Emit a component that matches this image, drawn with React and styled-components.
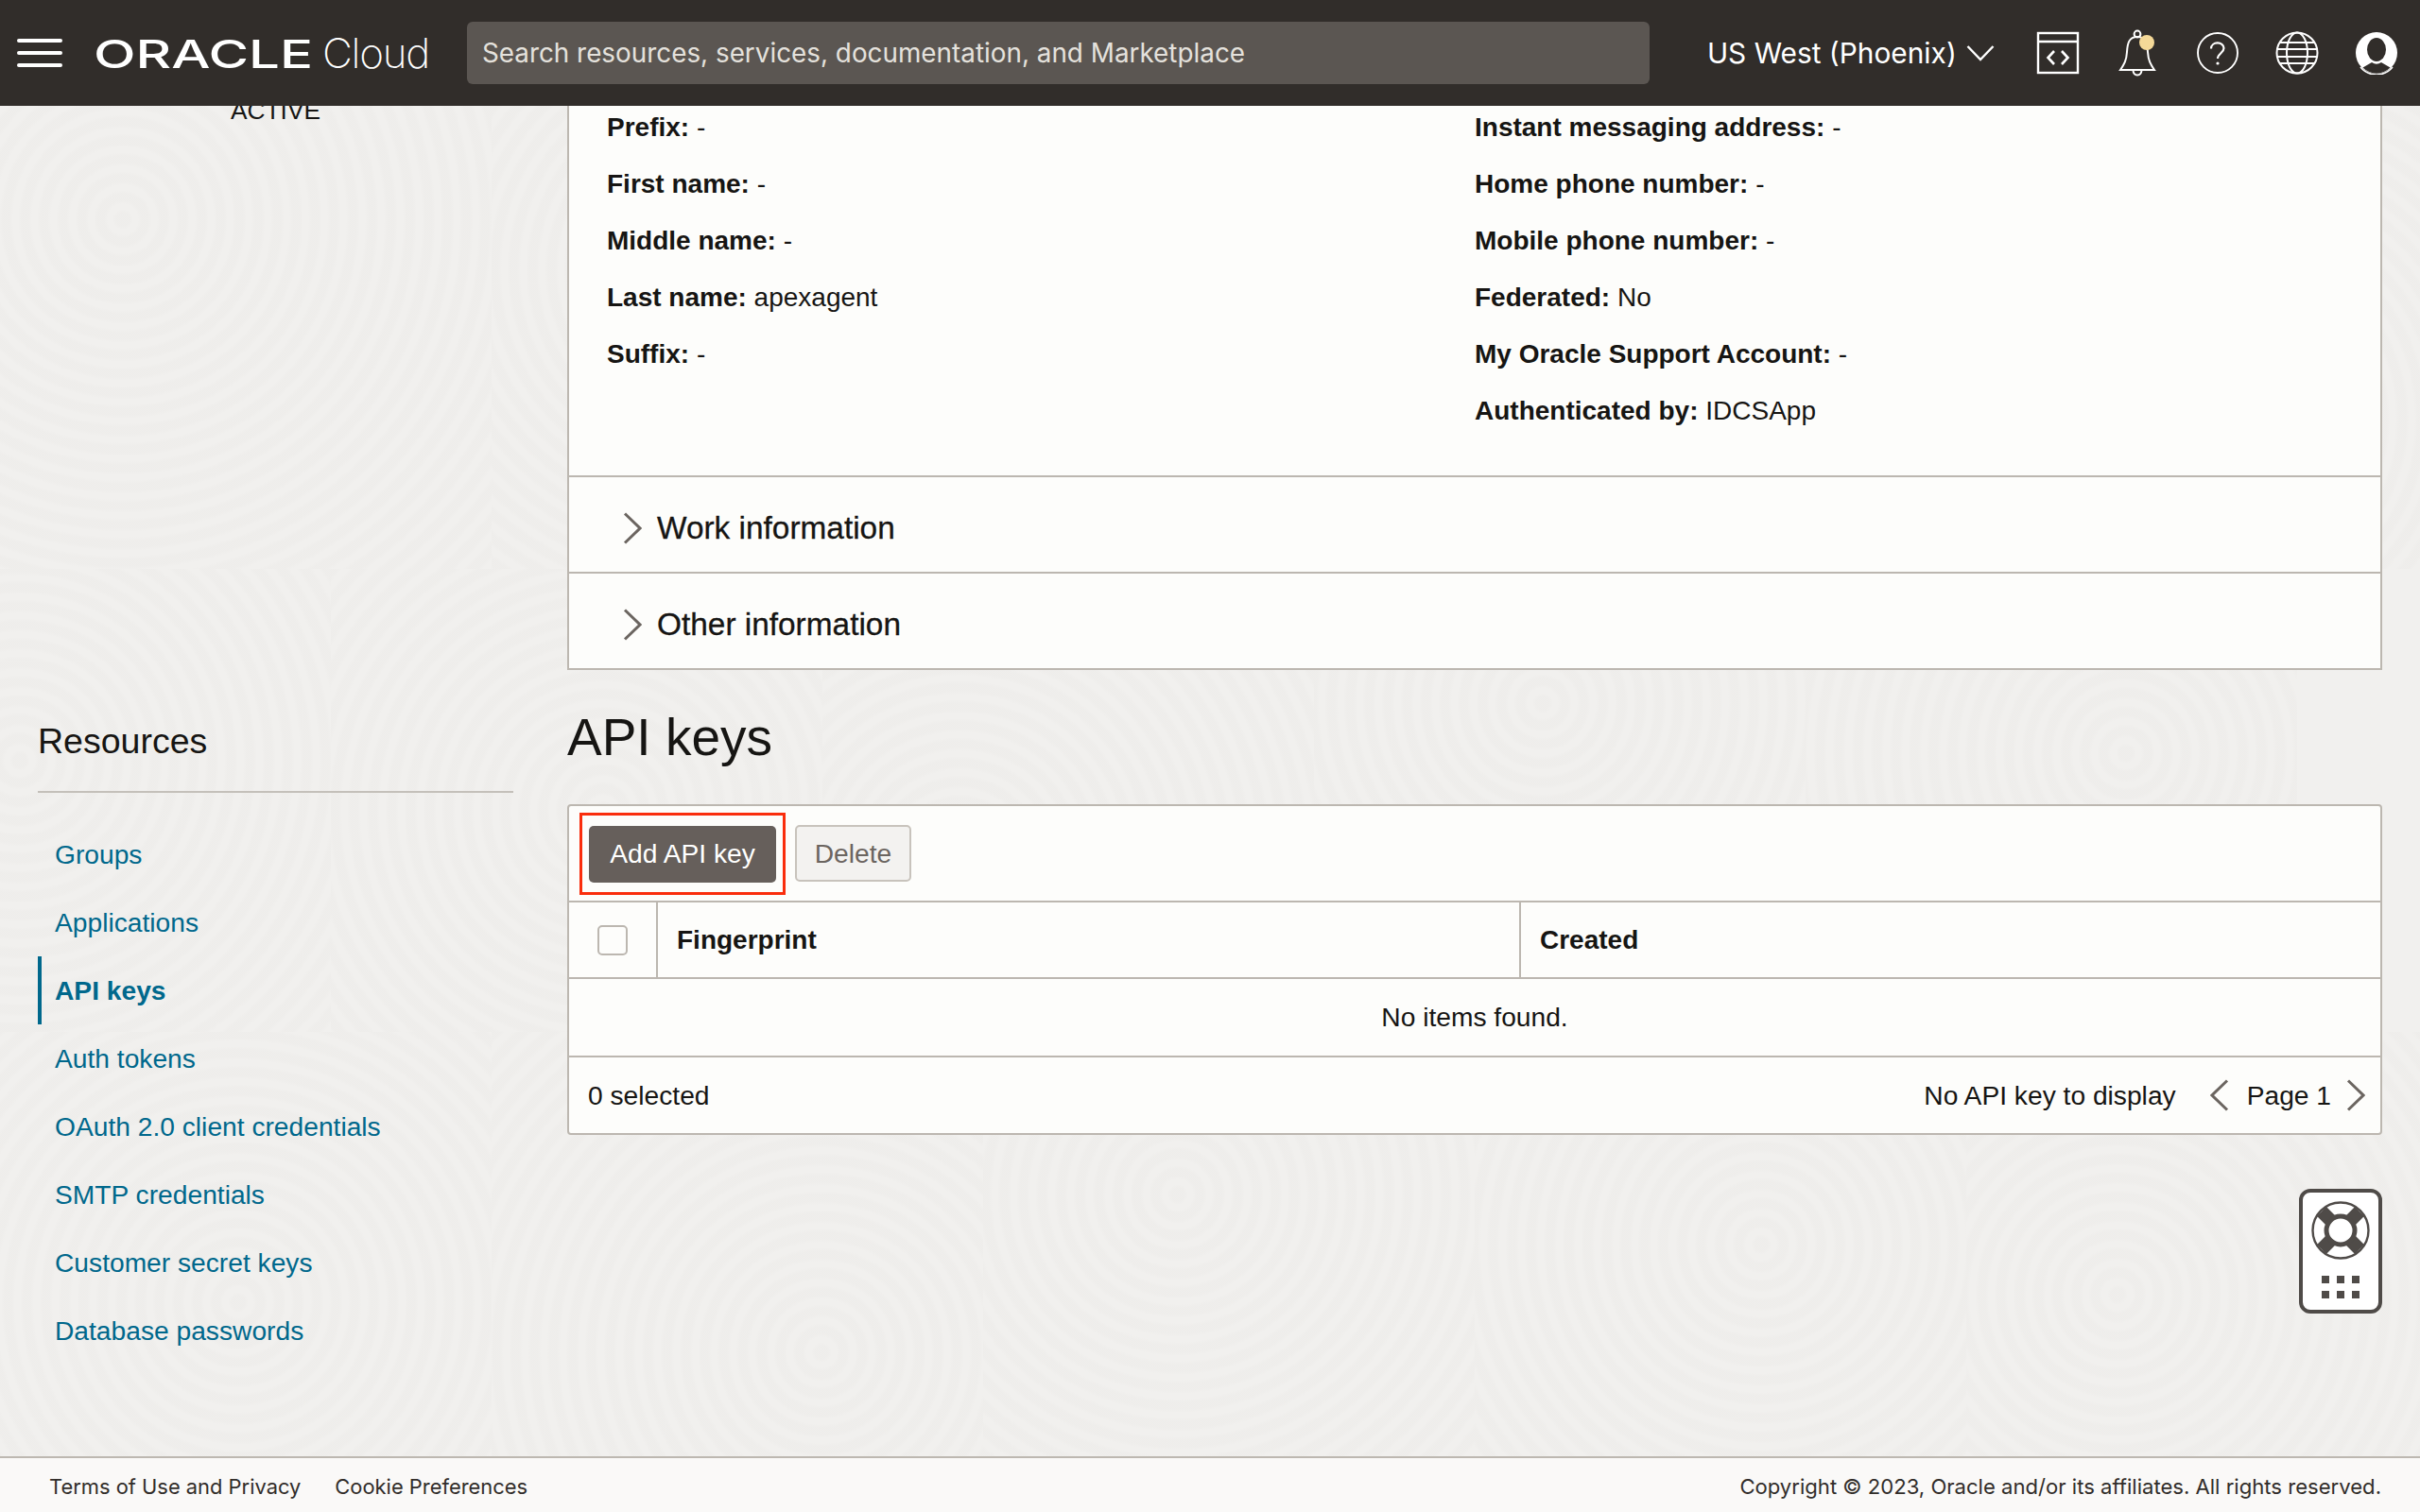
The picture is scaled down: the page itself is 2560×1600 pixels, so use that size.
import React from 'react'
import styled, { createGlobalStyle } from 'styled-components'

const leftRows = [
    ['Prefix:', '-'],
    ['First name:', '-'],
    ['Middle name:', '-'],
    ['Last name:', 'apexagent'],
    ['Suffix:', '-']
]

const rightRows = [
    ['Instant messaging address:', '-'],
    ['Home phone number:', '-'],
    ['Mobile phone number:', '-'],
    ['Federated:', 'No'],
    ['My Oracle Support Account:', '-'],
    ['Authenticated by:', 'IDCSApp']
]

const links = [
    'Groups',
    'Applications',
    'API keys',
    'Auth tokens',
    'OAuth 2.0 client credentials',
    'SMTP credentials',
    'Customer secret keys',
    'Database passwords'
]

// swirl tiles for the page background, laid side by side so the rings don't interfere
const tiles = []
for (let row = 0; row < 3; row++) {
    for (let col = 0; col < 5; col++) {
        tiles.push({
            x: col * 520 - (row % 2) * 170,
            y: row * 490,
            cx: 130 + ((col * 97 + row * 61) % 240),
            cy: 120 + ((col * 53 + row * 83) % 220)
        })
    }
}

const swirlImages = tiles
    .map(
        t =>
            `repeating-radial-gradient(circle at ${t.cx}px ${t.cy}px, rgba(90, 80, 70, 0.014) 0 7px, transparent 11px 16px, rgba(90, 80, 70, 0.014) 20px)`
    )
    .join(', ')
const swirlPositions = tiles.map(t => `${t.x}px ${t.y}px`).join(', ')

const Chevron = ({ dir = 'right', color = '#6b6560', width = 20, height = 34 }) => (
    <svg width={width} height={height} viewBox='0 0 20 34' fill='none'>
        <path
            d={dir === 'right' ? 'M2 1.5 L18 17 L2 32.5' : 'M18 1.5 L2 17 L18 32.5'}
            stroke={color}
            strokeWidth='3'
        />
    </svg>
)

const App = () => (
    <Page>
        <GlobalStyle />
        <Header>
            <Burger>
                <span />
                <span />
                <span />
            </Burger>
            <svg width='236' height='50' viewBox='0 0 236 50'>
                <text
                    x='0'
                    y='41'
                    fill='#fff'
                    fontFamily='Inter, sans-serif'
                    fontWeight='500'
                    fontSize='41'
                    textLength='232'
                    lengthAdjust='spacingAndGlyphs'
                >
                    ORACLE
                </text>
            </svg>
            <CloudText>Cloud</CloudText>
            <Search>Search resources, services, documentation, and Marketplace</Search>
            <Region>
                US West (Phoenix)
                <svg width='30' height='18' viewBox='0 0 30 18' fill='none'>
                    <path d='M1.5 2 L15 16 L28.5 2' stroke='#fff' strokeWidth='2.4' />
                </svg>
            </Region>
            <HeaderIcons>
                <svg width='46' height='46' viewBox='0 0 46 46' fill='none' stroke='#fff' strokeWidth='2.4'>
                    <rect x='2' y='2' width='42' height='42' />
                    <path d='M2 11 H44' />
                    <path d='M19 21 L12.5 28 L19 35 M27 21 L33.5 28 L27 35' strokeWidth='2.6' />
                </svg>
                <svg width='44' height='50' viewBox='0 0 44 50' fill='none' stroke='#fff' strokeWidth='2'>
                    <circle cx='20' cy='5' r='3.4' />
                    <path d='M2 43 C6 37 8.5 33 9 24 C9.5 15 11 8 20 8 C29 8 30.5 15 31 24 C31.5 33 34 37 38 43 Z' />
                    <path d='M15.5 43.5 C16 50 24 50 24.5 43.5' />
                    <circle cx='30' cy='14' r='8' fill='#f5d998' stroke='none' />
                </svg>
                <svg width='46' height='46' viewBox='0 0 46 46' fill='none' stroke='#fff' strokeWidth='1.9'>
                    <circle cx='23' cy='23' r='21' />
                    <path d='M16 18.5 C16 10.5 29.5 10.5 29.5 18 C29.5 23 23 23.5 23 29' strokeWidth='2.2' />
                    <circle cx='23' cy='34' r='1.6' fill='#fff' stroke='none' />
                </svg>
                <svg width='46' height='46' viewBox='0 0 46 46' fill='none' stroke='#fff' strokeWidth='2'>
                    <circle cx='23' cy='23' r='21.5' />
                    <ellipse cx='23' cy='23' rx='11' ry='21.5' />
                    <path d='M5 12 H41 M1.5 19 H44.5 M1.5 27 H44.5 M5 34 H41' />
                </svg>
                <svg width='46' height='46' viewBox='0 0 46 46'>
                    <circle cx='23' cy='23' r='22' fill='#fff' />
                    <ellipse cx='23' cy='19.5' rx='10' ry='12.5' fill='#312d2a' />
                    <path d='M8.5 38.5 L18 33 Q23 36.5 28 33 L37.5 38.5 A20 20 0 0 1 8.5 38.5 Z' fill='#312d2a' />
                    <path d='M6 38 A22 22 0 0 0 40 38' fill='none' stroke='#fff' strokeWidth='1.6' />
                </svg>
            </HeaderIcons>
        </Header>

        <Viewport>
            <Scrolled>
                <Sidebar>
                    <Status>ACTIVE</Status>
                    <SideTitle>Resources</SideTitle>
                    <Nav>
                        {links.map(link => (
                            <NavItem key={link} $active={link === 'API keys'}>
                                {link}
                            </NavItem>
                        ))}
                    </Nav>
                </Sidebar>

                <Main>
                    <InfoPanel>
                        <Details>
                            <Column>
                                {leftRows.map(([label, value]) => (
                                    <Row key={label}>
                                        <b>{label}</b> {value}
                                    </Row>
                                ))}
                            </Column>
                            <Column>
                                {rightRows.map(([label, value]) => (
                                    <Row key={label}>
                                        <b>{label}</b> {value}
                                    </Row>
                                ))}
                            </Column>
                        </Details>
                        <Section>
                            <Chevron />
                            <SectionLabel>Work information</SectionLabel>
                        </Section>
                        <Section>
                            <Chevron />
                            <SectionLabel>Other information</SectionLabel>
                        </Section>
                    </InfoPanel>

                    <Heading>API keys</Heading>

                    <TablePanel>
                        <Toolbar>
                            <Highlight>
                                <PrimaryButton>Add API key</PrimaryButton>
                            </Highlight>
                            <GhostButton>Delete</GhostButton>
                        </Toolbar>
                        <HeadRow>
                            <CheckCell>
                                <Checkbox />
                            </CheckCell>
                            <HeadCell $width='913px'>Fingerprint</HeadCell>
                            <HeadCell>Created</HeadCell>
                        </HeadRow>
                        <EmptyRow>No items found.</EmptyRow>
                        <TableFooter>
                            <span>0 selected</span>
                            <Pager>
                                <PagerText>No API key to display</PagerText>
                                <Chevron dir='left' />
                                <PageLabel>Page 1</PageLabel>
                                <Chevron />
                            </Pager>
                        </TableFooter>
                    </TablePanel>
                </Main>
            </Scrolled>

            <HelpWidget>
                <svg width='62' height='62' viewBox='0 0 62 62'>
                    <circle cx='31' cy='31' r='29.5' fill='#fff' stroke='#4f4b48' strokeWidth='2.4' />
                    <g stroke='#4f4b48' strokeWidth='14'>
                        <path d='M11 11 L22 22 M51 11 L40 22 M11 51 L22 40 M51 51 L40 40' />
                    </g>
                    <circle cx='31' cy='31' r='15' fill='#fff' stroke='#4f4b48' strokeWidth='5' />
                </svg>
                <DotGrid>
                    {[0, 1, 2, 3, 4, 5].map(i => (
                        <i key={i} />
                    ))}
                </DotGrid>
            </HelpWidget>
        </Viewport>

        <Footer>
            <FooterLinks>
                <span>Terms of Use and Privacy</span>
                <span>Cookie Preferences</span>
            </FooterLinks>
            <Copyright>Copyright © 2023, Oracle and/or its affiliates. All rights reserved.</Copyright>
        </Footer>
    </Page>
)

const GlobalStyle = createGlobalStyle`
    * {
        box-sizing: border-box;
    }

    body {
        margin: 0;
        font-family: 'Liberation Sans', Arial, sans-serif;
        color: #161513;
    }
`

const Page = styled.div`
    width: 2560px;
    height: 1600px;
    display: flex;
    flex-direction: column;
    overflow: hidden;
`

const Header = styled.header`
    height: 112px;
    flex: none;
    display: flex;
    align-items: center;
    padding-left: 18px;
    background: #312d2a;
    position: relative;
    z-index: 2;
`

const Burger = styled.div`
    width: 48px;
    display: flex;
    flex-direction: column;
    gap: 9px;
    margin-right: 33px;

    span {
        display: block;
        height: 4px;
        border-radius: 2px;
        background: #fff;
    }
`

const CloudText = styled.span`
    margin-left: 6px;
    font-family: Inter, sans-serif;
    font-weight: 200;
    font-size: 44px;
    letter-spacing: -1.3px;
    color: #fff;
`

const Search = styled.div`
    width: 1251px;
    height: 66px;
    margin-left: 40px;
    padding-left: 16px;
    display: flex;
    align-items: center;
    border-radius: 6px;
    background: #5b5652;
    color: #e4e1dc;
    font-family: Inter, sans-serif;
    font-size: 27.85px;
`

const Region = styled.div`
    margin-left: 61px;
    display: flex;
    align-items: center;
    gap: 10px;
    color: #fff;
    font-family: Inter, sans-serif;
    font-size: 29.85px;
`

const HeaderIcons = styled.div`
    margin-left: 44px;
    display: flex;
    align-items: center;
    gap: 38px;

    svg:first-child {
        margin-right: 3px;
    }
`

const Viewport = styled.div`
    flex: 1;
    min-height: 0;
    overflow: hidden;
    position: relative;
    background-color: #f1f0ee;
    background-image: ${swirlImages};
    background-size: 520px 490px;
    background-position: ${swirlPositions};
    background-repeat: no-repeat;
`

const Scrolled = styled.div`
    display: flex;
    margin-top: -40px;
`

const Sidebar = styled.aside`
    width: 600px;
    flex: none;
    padding: 25px 57px 0 40px;
`

const Status = styled.div`
    line-height: 40px;
    font-size: 26.3px;
    text-align: center;
`

const SideTitle = styled.h2`
    margin: 621px 0 0;
    padding-bottom: 27px;
    border-bottom: 2px solid #c4c0ba;
    line-height: 52px;
    font-size: 37.5px;
    font-weight: 400;
`

const Nav = styled.nav`
    margin-top: 29px;
    display: flex;
    flex-direction: column;
`

const NavItem = styled.a`
    height: 72px;
    display: flex;
    align-items: center;
    padding-left: 14px;
    border-left: 4px solid ${props => (props.$active ? '#00688c' : 'transparent')};
    color: #00688c;
    font-size: 28.2px;
    font-weight: ${props => (props.$active ? 700 : 400)};
`

const Main = styled.main`
    width: 1920px;
    flex: none;
`

const InfoPanel = styled.section`
    border: 2px solid #bcb7b0;
    border-top: none;
    background: #fdfdfb;
`

const Details = styled.div`
    display: grid;
    grid-template-columns: 918px 1fr;
    padding: 33px 0 38px 40px;
`

const Column = styled.div`
    display: flex;
    flex-direction: column;
`

const Row = styled.div`
    line-height: 60px;
    font-size: 28px;

    b {
        font-weight: 700;
    }
`

const Section = styled.div`
    height: 102px;
    display: flex;
    align-items: center;
    gap: 16px;
    padding: 7px 0 0 57px;
    border-top: 2px solid #bcb7b0;
`

const SectionLabel = styled.span`
    font-size: 33.4px;
    -webkit-text-stroke: 0.3px #161513;
`

const Heading = styled.h1`
    margin: 0;
    height: 142px;
    display: flex;
    align-items: center;
    font-size: 55px;
    font-weight: 400;
`

const TablePanel = styled.section`
    border: 2px solid #bcb7b0;
    border-radius: 4px;
    background: #fdfdfb;
    font-size: 28.2px;
`

const Toolbar = styled.div`
    height: 100px;
    display: flex;
    align-items: center;
    padding-left: 11px;
    gap: 10px;
`

const Highlight = styled.div`
    padding: 11px 7px 10px;
    border: 3px solid #fa2d0c;
`

const PrimaryButton = styled.div`
    width: 198px;
    height: 60px;
    display: flex;
    align-items: center;
    justify-content: center;
    border-radius: 5px;
    background: #665f5b;
    color: #fff;
`

const GhostButton = styled.div`
    width: 123px;
    height: 60px;
    display: flex;
    align-items: center;
    justify-content: center;
    border: 2px solid #c8c3bc;
    border-radius: 5px;
    background: #f3f2f0;
    color: #6b6560;
`

const HeadRow = styled.div`
    height: 83px;
    display: flex;
    border-top: 2px solid #bcb7b0;
    border-bottom: 2px solid #bcb7b0;
`

const CheckCell = styled.div`
    width: 92px;
    flex: none;
    display: flex;
    align-items: center;
    padding-left: 30px;
`

const Checkbox = styled.div`
    width: 32px;
    height: 32px;
    border: 2px solid #bcb7b0;
    border-radius: 5px;
`

const HeadCell = styled.div`
    width: ${props => props.$width || 'auto'};
    flex: ${props => (props.$width ? 'none' : 1)};
    display: flex;
    align-items: center;
    padding-left: 20px;
    border-left: 2px solid #bcb7b0;
    font-size: 28px;
    font-weight: 700;
`

const EmptyRow = styled.div`
    height: 81px;
    display: flex;
    align-items: center;
    justify-content: center;
`

const TableFooter = styled.div`
    height: 82px;
    display: flex;
    align-items: center;
    justify-content: space-between;
    padding: 0 16px 0 20px;
    border-top: 2px solid #bcb7b0;
`

const Pager = styled.div`
    display: flex;
    align-items: center;
    gap: 19px;
`

const PagerText = styled.span`
    margin-right: 17px;
`

const PageLabel = styled.span`
    margin-right: -3px;
`

const HelpWidget = styled.div`
    position: absolute;
    left: 2432px;
    top: 1146px;
    width: 88px;
    height: 132px;
    display: flex;
    flex-direction: column;
    align-items: center;
    gap: 17px;
    padding-top: 9px;
    border: 4px solid #4f4b48;
    border-radius: 12px;
    background: #fff;
`

const DotGrid = styled.div`
    display: grid;
    grid-template-columns: repeat(3, 8px);
    gap: 8px;

    i {
        display: block;
        height: 8px;
        background: #4f4b48;
    }
`

const Footer = styled.footer`
    height: 59px;
    flex: none;
    display: flex;
    align-items: center;
    justify-content: space-between;
    padding: 2px 41px 0 52px;
    border-top: 2px solid #bdb8b1;
    background: #faf9f8;
    color: #312d2a;
    font-family: Inter, sans-serif;
`

const FooterLinks = styled.div`
    display: flex;
    gap: 36px;
    font-size: 21.9px;
`

const Copyright = styled.span`
    font-size: 22.1px;
`

export default App
